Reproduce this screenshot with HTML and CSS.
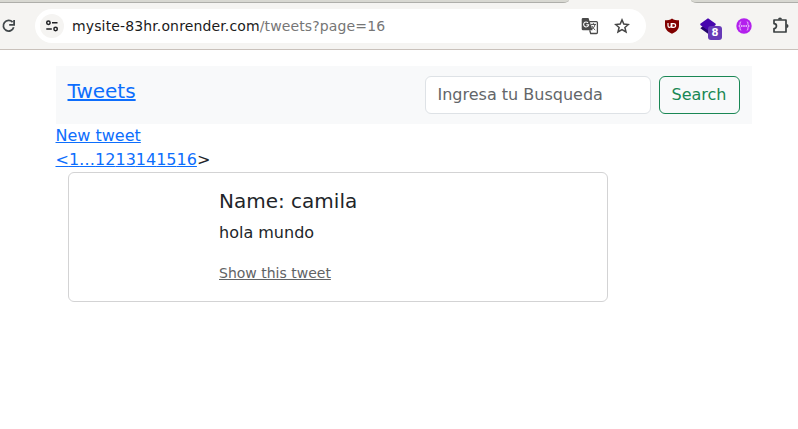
FILE: index.html
```html
<!DOCTYPE html>
<html lang="es">
<head>
<meta charset="utf-8">
<title>Tweets</title>
<link rel="stylesheet" href="styles.css">
</head>
<body>
<header class="browser">
  <div class="tabs"><span class="tab tab-left"></span><span class="tab tab-right"></span></div>
  <div class="toolbar">
    <svg class="reload" width="16" height="16" viewBox="0 0 16 16" fill="none" stroke="#41474a" stroke-width="1.8"><path d="M12.6 4.2A5.3 5.3 0 1 0 13.7 9.3M14.1 2v4.9H9.2"/></svg>
    <div class="address">
      <span class="site"><svg width="14" height="12" viewBox="0 0 14 12" fill="none" stroke="#202124" stroke-width="1.5"><circle cx="3.4" cy="2.7" r="1.7"/><circle cx="10.6" cy="9" r="1.7"/><path d="M7 2.7h5.5M1.3 9h5.5"/></svg></span>
      <span class="url">mysite-83hr.onrender.com<span class="path">/tweets?page=16</span></span>
      <svg class="translate" width="18" height="18" viewBox="0 0 18 18"><path d="M2 1h5.500l4.100 12.200H2a1.300 1.300 0 0 1-1.300-1.300V2.300A1.300 1.300 0 0 1 2 1z" fill="#4a4a4a"/><path d="M8.300 4.600h7.100a1 1 0 0 1 1 1v9.900a1 1 0 0 1-1 1H9.700l-1-3.300" fill="none" stroke="#4a4a4a" stroke-width="1.300"/><path d="M7 5.800a2.500 2.500 0 1 0 .6 2H5.300" fill="none" stroke="#fff" stroke-width="1.100"/><path d="M9.800 7.400h5.200M12.400 6.200v1.200M14 7.400c-.4 2.300-1.700 3.800-3.400 5M10.800 8.800c.7 1.600 1.800 3 3.400 4.200" fill="none" stroke="#4a4a4a"/></svg>
      <svg class="star" width="16" height="16" viewBox="0 0 16 16" fill="none" stroke="#454545" stroke-width="1.5"><path d="M8 1.900l1.800 4.200 4.600.4-3.500 3 1.100 4.500L8 11.600 4 14l1.100-4.500-3.500-3 4.600-.4z"/></svg>
    </div>
    <svg class="shield" width="16" height="16" viewBox="0 0 16 16"><path d="M8 .4C6 1.800 3.700 2.300 1 2.300v5C1 11.500 4 14.200 8 15.700c4-1.500 7-4.200 7-8.400v-5C12.300 2.300 10 1.800 8 .4z" fill="#800000"/><path d="M4 5v2.700a1.600 1.600 0 0 0 3.200 0V5M7.800 5v4.300H9.500a2.100 1.850 0 0 0 0-3.700H7.800" fill="none" stroke="#fff" stroke-width="1.200"/></svg>
    <span class="layers"><svg width="16" height="16" viewBox="0 0 16 16"><path d="M.3 10.200 3 8h10l2.700 2.200L8 15.800z" fill="#24066b"/><path d="M8 .2l7.700 5.600v1.300L8 12.500.3 7.100V5.800z" fill="#4706ae"/></svg><b class="count">8</b></span>
    <svg class="graph" width="16" height="16" viewBox="0 0 16 16"><circle cx="8" cy="8" r="7.700" fill="#b320ed"/><path d="M5.200 3.800c-1.500 0-1 1.600-1.200 2.900C3.900 7.600 3.500 8 2.700 8c.8 0 1.200.4 1.300 1.300.2 1.300-.3 2.900 1.200 2.900M10.800 3.800c1.500 0 1 1.600 1.200 2.900.1.900.5 1.300 1.300 1.300-.8 0-1.200.4-1.300 1.300-.2 1.300.3 2.900-1.200 2.900" fill="none" stroke="#efc8ff"/><path d="M5.200 8h1.200M7.400 8h1.200M9.600 8h1.200" stroke="#fff" stroke-width="1.300"/></svg>
    <svg class="puzzle" width="18" height="18" viewBox="0 0 18 18"><path d="M2 3h12v12H2v-3.500a2.400 2.400 0 0 0 0-4.900z" fill="none" stroke="#3b4042" stroke-width="1.700" stroke-linejoin="round"/><path d="M6 2.500a2 2 0 0 1 4 0M14.500 7a2 2 0 0 1 0 4" fill="#3b4042"/></svg>
  </div>
</header>
<main class="container">
  <nav class="navbar">
    <a class="brand" href="#">Tweets</a>
    <form class="search">
      <input type="search" placeholder="Ingresa tu Busqueda" aria-label="Buscar">
      <button type="button">Search</button>
    </form>
  </nav>
  <div class="line"><a href="#">New tweet</a></div>
  <div class="line"><a href="#">&lt;</a><a href="#">1</a><a href="#">…</a><a href="#">12</a><a href="#">13</a><a href="#">14</a><a href="#">15</a><a href="#">16</a>&gt;</div>
  <article class="card">
    <div class="card-body">
      <h5>Name: camila</h5>
      <p>hola mundo</p>
      <p><small><a href="#">Show this tweet</a></small></p>
    </div>
  </article>
</main>
</body>
</html>
```
FILE: styles.css
```css
* { box-sizing: border-box; }
body { margin: 0; background: #fff; color: #212529; font: 16px/24px "DejaVu Sans", sans-serif; overflow: hidden; }
svg { display: block; flex: none; }
a { color: #0d6efd; }

.browser { height: 50px; background: #f5f4f2; border-bottom: 1px solid #c9c1bb; }
.tabs { height: 3px; display: flex; justify-content: space-between; }
.tab { background: #d8d8d2; border-bottom: 1px solid #aeaeaa; }
.tab-left { width: 569px; border-bottom-right-radius: 6px 3px; }
.tab-right { width: 107px; border-bottom-left-radius: 6px 3px; }
.toolbar { height: 46px; display: flex; align-items: center; }
.reload { margin-left: 0; }
.address { width: 611px; height: 34px; margin-left: 19px; padding: 0 16px 0 5px; border-radius: 17px; background: #fff; display: flex; align-items: center; }
.site { width: 24px; height: 24px; border-radius: 50%; background: #f5f4f2; display: flex; align-items: center; justify-content: center; }
.url { flex: 1; margin-left: 8px; color: #1b1b1b; font-size: 14px; letter-spacing: .13px; line-height: 20px; white-space: nowrap; }
.path { color: #767676; }
.star { margin-left: 15px; }
.shield { margin-left: 18px; }
.layers { position: relative; margin-left: 20px; }
.count { position: absolute; left: 8px; top: 8px; width: 14px; height: 14px; border-radius: 3px; background: #673ab7; color: #fff; font-size: 10px; line-height: 14px; text-align: center; }
.graph { margin-left: 20px; }
.puzzle { margin-left: 20px; }

.container { width: 696px; margin: 16px 0 0 55.5px; }
.navbar { height: 58px; padding: 10px 12px; background: #f8f9fa; display: flex; align-items: flex-start; justify-content: space-between; }
.brand { font-size: 20px; line-height: 30px; }
.search { display: flex; gap: 8px; }
input, button { height: 38px; padding: 6px 12px; border-radius: 6px; font: inherit; }
input { width: 226px; padding: 5px 12px 7px; border: 1px solid #dee2e6; background: #fff; appearance: none; }
input::placeholder { color: #636669; opacity: 1; }
button { width: 81px; padding: 6px 0; border: 1px solid #198754; background: transparent; color: #198754; }

.card { width: 540px; height: 130px; margin-left: 12px; border: 1px solid #d3d3d4; border-radius: 6px; display: grid; grid-template-columns: 1fr 3fr; }
.card-body { grid-column: 2; padding: 16px; }
h5 { margin: 0 0 8px; font-size: 20px; font-weight: 500; line-height: 24px; }
p { margin: 0 0 16px; }
small { font-size: 14px; }
small a { color: #616365; }
```
